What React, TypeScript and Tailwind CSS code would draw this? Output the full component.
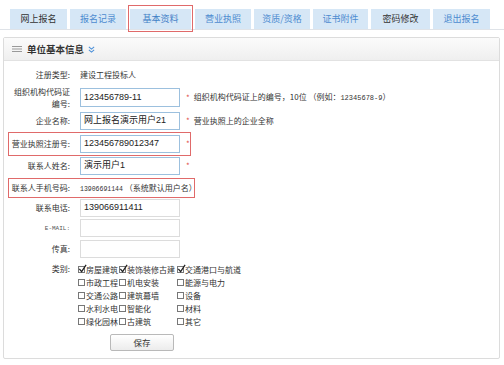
const tabs = [
  { name: '网上报名', w: 'w-[57px]', cls: 'text-[#333]' },
  { name: '报名记录', w: 'w-[56px]', cls: 'text-[#4d8bd0]' },
  { name: '基本资料', w: 'w-[61px]', cls: 'text-[#3f7fc6]', boxed: true },
  { name: '营业执照', w: 'w-[56px]', cls: 'text-[#4d8bd0]' },
  { name: '资质/资格', w: 'w-[56px]', cls: 'text-[#4d8bd0]' },
  { name: '证书附件', w: 'w-[55px]', cls: 'text-[#4d8bd0]' },
  { name: '密码修改', w: 'w-[59px]', cls: 'text-[#333]' },
  { name: '退出报名', w: 'w-[57px]', cls: 'text-[#4d8bd0]' },
];

const categories = [
  [
    { label: '房屋建筑', checked: true },
    { label: '市政工程' },
    { label: '交通公路' },
    { label: '水利水电' },
    { label: '绿化园林' },
  ],
  [
    { label: '装饰装修古建', checked: true },
    { label: '机电安装' },
    { label: '建筑幕墙' },
    { label: '智能化' },
    { label: '古建筑' },
  ],
  [
    { label: '交通港口与航道', checked: true },
    { label: '能源与电力' },
    { label: '设备' },
    { label: '材料' },
    { label: '其它' },
  ],
];

const Label = ({ children }: { children: React.ReactNode }) => (
  <div className="w-[66px] shrink-0 text-right text-[8px] leading-[12px] text-[#333]">{children}</div>
);

const Input = ({ value, blue }: { value?: string; blue?: boolean }) => (
  <div
    className={`ml-[10px] flex h-full w-[100px] items-center border px-[3px] text-[9px] text-[#222] font-['Liberation_Sans','Noto_Sans_CJK_SC',sans-serif] ${
      blue ? 'border-[#9cc0de]' : 'border-[#dcdcdc]'
    }`}
  >
    {value}
  </div>
);

const Star = () => <span className="ml-[6px] text-[8px] text-[#e2504a]">*</span>;

const Check = ({ checked, label }: { checked?: boolean; label: string }) => (
  <div className="flex h-[13px] items-center text-[8px] text-[#333]">
    <span className="relative mr-[1px] h-[7px] w-[7px] shrink-0 border border-[#777] bg-white">
      {checked && (
        <svg className="absolute -left-[1px] -top-[3px] h-[9px] w-[9px]" viewBox="0 0 10 10">
          <path d="M1.5 5.5 L4 8.5 L9 1" fill="none" stroke="#222" strokeWidth="1.4" />
        </svg>
      )}
    </span>
    {label}
  </div>
);

export default function App() {
  return (
    <div className="h-[365px] w-[504px] overflow-hidden bg-white font-['Noto_Sans_CJK_SC',sans-serif]">
      {/* tabs */}
      <div className="flex h-[30px] items-end border-b border-[#dfe3e8] pl-[10px]">
        {tabs.map((t, i) => (
          <div
            key={t.name}
            className={`relative flex h-[20px] ${t.w} items-center justify-center bg-[#d6e7f6] text-[9px] ${t.cls} ${
              i === 0 ? '' : i === 2 || i === 3 ? 'ml-[4px]' : 'ml-[3px]'
            }`}
          >
            {t.name}
            {t.boxed && <div className="absolute -bottom-[3px] -left-[2px] -right-[2px] -top-[4px] border border-[#e06a6a]" />}
          </div>
        ))}
      </div>

      {/* panel */}
      <div className="ml-[3px] mt-[7px] h-[322px] w-[497px] rounded-[2px] border border-[#dcdcdc]">
        <div className="flex h-[23px] items-center border-b border-[#e2e2e2] bg-gradient-to-b from-[#fbfbfb] to-[#efefef] pl-[8px]">
          <svg className="h-[6px] w-[10px]" viewBox="0 0 10 6">
            <path d="M0 0.5H10M0 3H10M0 5.5H10" stroke="#999" strokeWidth="1" />
          </svg>
          <span className="ml-[5px] text-[9.5px] font-bold text-[#333]">单位基本信息</span>
          <svg className="ml-[4px] h-[7px] w-[7px]" viewBox="0 0 8 8">
            <path d="M1 1 L4 3.5 L7 1 M1 4.5 L4 7 L7 4.5" fill="none" stroke="#4a8fd8" strokeWidth="1.2" />
          </svg>
        </div>

        <div className="pt-[6px]">
          <div className="flex h-[16px] items-center">
            <Label>注册类型:</Label>
            <span className="ml-[10px] text-[8px] text-[#333]">建设工程投标人</span>
          </div>

          <div className="mt-[5px] flex h-[19px] items-center">
            <Label>
              组织机构代码证
              <br />
              编号:
            </Label>
            <Input value="123456789-11" blue />
            <Star />
            <span className="ml-[4px] text-[8px] text-[#333]">
              组织机构代码证上的编号，10位 （例如：<span className="font-['Liberation_Mono',monospace] text-[7px]">12345678-9</span>）
            </span>
          </div>

          <div className="mt-[5px] flex h-[18px] items-center">
            <Label>企业名称:</Label>
            <Input value="网上报名演示用户21" blue />
            <Star />
            <span className="ml-[4px] text-[8px] text-[#333]">营业执照上的企业全称</span>
          </div>

          <div className="relative mt-[5px] flex h-[18px] items-center">
            <Label>营业执照注册号:</Label>
            <Input value="123456789012347" blue />
            <Star />
            <div className="absolute -bottom-[3px] -top-[3px] left-[4px] w-[183px] border border-[#e06a6a]" />
          </div>

          <div className="mt-[4px] flex h-[18px] items-center">
            <Label>联系人姓名:</Label>
            <Input value="演示用户1" blue />
            <Star />
          </div>

          <div className="relative mt-[4px] flex h-[18px] items-center">
            <Label>联系人手机号码:</Label>
            <span className="ml-[10px] text-[8px] text-[#333]">
              <span className="font-['Liberation_Mono',monospace] text-[6.5px]">13906691144</span> （系统默认用户名）
            </span>
            <div className="absolute -bottom-[1px] -top-[1px] left-[4px] w-[187px] border border-[#e06a6a]" />
          </div>

          <div className="mt-[2px] flex h-[18px] items-center">
            <Label>联系电话:</Label>
            <Input value="139066911411" />
          </div>

          <div className="mt-[2px] flex h-[18px] items-center">
            <Label>
              <span className="font-['Liberation_Mono',monospace] text-[6px] text-[#555]">E-MAIL:</span>
            </Label>
            <Input />
          </div>

          <div className="mt-[3px] flex h-[18px] items-center">
            <Label>传真:</Label>
            <Input />
          </div>

          <div className="mt-[5px] flex">
            <div className="h-[13px] leading-[13px]">
              <Label>类别:</Label>
            </div>
            <div className="ml-[8px] flex">
              <div className="w-[41px]">
                {categories[0].map((c) => (
                  <Check key={c.label} {...c} />
                ))}
              </div>
              <div className="w-[58px]">
                {categories[1].map((c) => (
                  <Check key={c.label} {...c} />
                ))}
              </div>
              <div>
                {categories[2].map((c) => (
                  <Check key={c.label} {...c} />
                ))}
              </div>
            </div>
          </div>

          <div className="mt-[6px] flex pl-[106px]">
            <button className="h-[17px] w-[64px] rounded-[2px] border border-[#b9b9b9] bg-gradient-to-b from-white to-[#ececec] text-[8.5px] text-[#333]">
              保存
            </button>
          </div>
        </div>
      </div>
    </div>
  );
}
